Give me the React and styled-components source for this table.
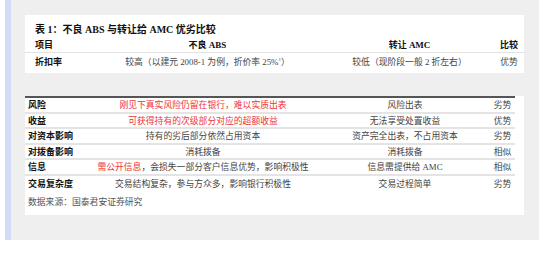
import React from "react";
import styled, { createGlobalStyle } from "styled-components";

const GlobalStyle = createGlobalStyle`
  html, body {
    margin: 0;
    padding: 0;
    background: #ffffff;
  }
  body {
    font-family: "Liberation Serif", "Noto Sans CJK SC", serif;
    color: #444;
  }
`;

const Page = styled.div`
  display: flex;
  width: 554px;
  height: 254px;
  padding-left: 5px;
  box-sizing: border-box;
`;

const SideStrip = styled.div`
  width: 6px;
  height: 240px;
  background: #d3daf4;
`;

const Panel = styled.div`
  width: 528px;
  height: 240px;
  background: #efefef;
  padding: 15px 0 0 14px;
  box-sizing: border-box;
  display: flex;
  flex-direction: column;
  gap: 23px;
`;

const Card = styled.div`
  width: 499px;
  background: #ffffff;
  box-sizing: border-box;
  padding: ${(p) => p.$pad || "0"};
`;

const Title = styled.div`
  font-size: 10px;
  line-height: 14px;
  font-weight: 700;
  color: #111;
  padding: 8px 0 0 10px;
`;

const Row = styled.div`
  display: grid;
  grid-template-columns: ${(p) => p.$cols};
  align-items: center;
  height: ${(p) => p.$h || "14px"};
  padding-left: ${(p) => p.$indent || "0"};
  border-bottom: ${(p) => p.$line || "none"};
  font-size: 8.8px;
  white-space: nowrap;
`;

const Cell = styled.div`
  text-align: ${(p) => p.$align || "center"};
  font-weight: ${(p) => (p.$bold ? 700 : 400)};
  color: ${(p) => (p.$bold ? "#111" : "#444")};
  font-size: ${(p) => (p.$bold ? "9px" : "8.8px")};
`;

const Red = styled.span`
  color: #ee3333;
`;

const Table = styled.div`
  width: 490px;
  border-top: 2px solid #555;
`;

const Source = styled.div`
  font-size: 8.8px;
  color: #555;
  padding: 5px 0 0 3px;
  line-height: 12px;
`;

const topCols = "60px 225px 179px 20px";
const bodyCols = "58px 234px 170px 25px";

const rows = [
  {
    label: "风险",
    abs: <Red>刚见下真实风险仍留在银行，难以实质出表</Red>,
    amc: "风险出表",
    cmp: "劣势",
  },
  {
    label: "收益",
    abs: <Red>可获得持有的次级部分对应的超额收益</Red>,
    amc: "无法享受处置收益",
    cmp: "优势",
  },
  {
    label: "对资本影响",
    abs: "持有的劣后部分依然占用资本",
    amc: "资产完全出表，不占用资本",
    cmp: "劣势",
  },
  { label: "对拨备影响", abs: "消耗拨备", amc: "消耗拨备", cmp: "相似" },
  {
    label: "信息",
    abs: (
      <>
        <Red>需公开信息</Red>，会损失一部分客户信息优势，影响积极性
      </>
    ),
    amc: "信息需提供给 AMC",
    cmp: "相似",
  },
  {
    label: "交易复杂度",
    abs: "交易结构复杂，参与方众多，影响银行积极性",
    amc: "交易过程简单",
    cmp: "劣势",
  },
];

const App = () => {
  return (
    <>
      <GlobalStyle />
      <Page>
        <SideStrip />
        <Panel>
          <Card $pad="0 0 3px 0">
            <Title>表 1：不良 ABS 与转让给 AMC 优劣比较</Title>
            <Row $cols={topCols} $h="15px" $indent="10px" $line="1px solid #e3e3e3">
              <Cell $align="left" $bold>项目</Cell>
              <Cell $bold>不良 ABS</Cell>
              <Cell $bold>转让 AMC</Cell>
              <Cell $bold>比较</Cell>
            </Row>
            <Row $cols={topCols} $h="17px" $indent="10px">
              <Cell $align="left" $bold>折扣率</Cell>
              <Cell>
                较高（以建元 2008-1 为例，折价率 25%<sup style={{ fontSize: "5px" }}>1</sup>）
              </Cell>
              <Cell>较低（现阶段一般 2 折左右）</Cell>
              <Cell>优势</Cell>
            </Row>
          </Card>
          <Card $pad="0 0 7px 0">
            <Table>
              {rows.map((r, i) => (
                <Row
                  key={r.label}
                  $cols={bodyCols}
                  $h={i === rows.length - 1 ? "15px" : "13.5px"}
                  $indent="3px"
                  $line={i === rows.length - 1 ? "none" : "2px solid #e4e4e4"}
                >
                  <Cell $align="left" $bold>{r.label}</Cell>
                  <Cell>{r.abs}</Cell>
                  <Cell>{r.amc}</Cell>
                  <Cell>{r.cmp}</Cell>
                </Row>
              ))}
            </Table>
            <Source>数据来源：国泰君安证券研究</Source>
          </Card>
        </Panel>
      </Page>
    </>
  );
};

export default App;
